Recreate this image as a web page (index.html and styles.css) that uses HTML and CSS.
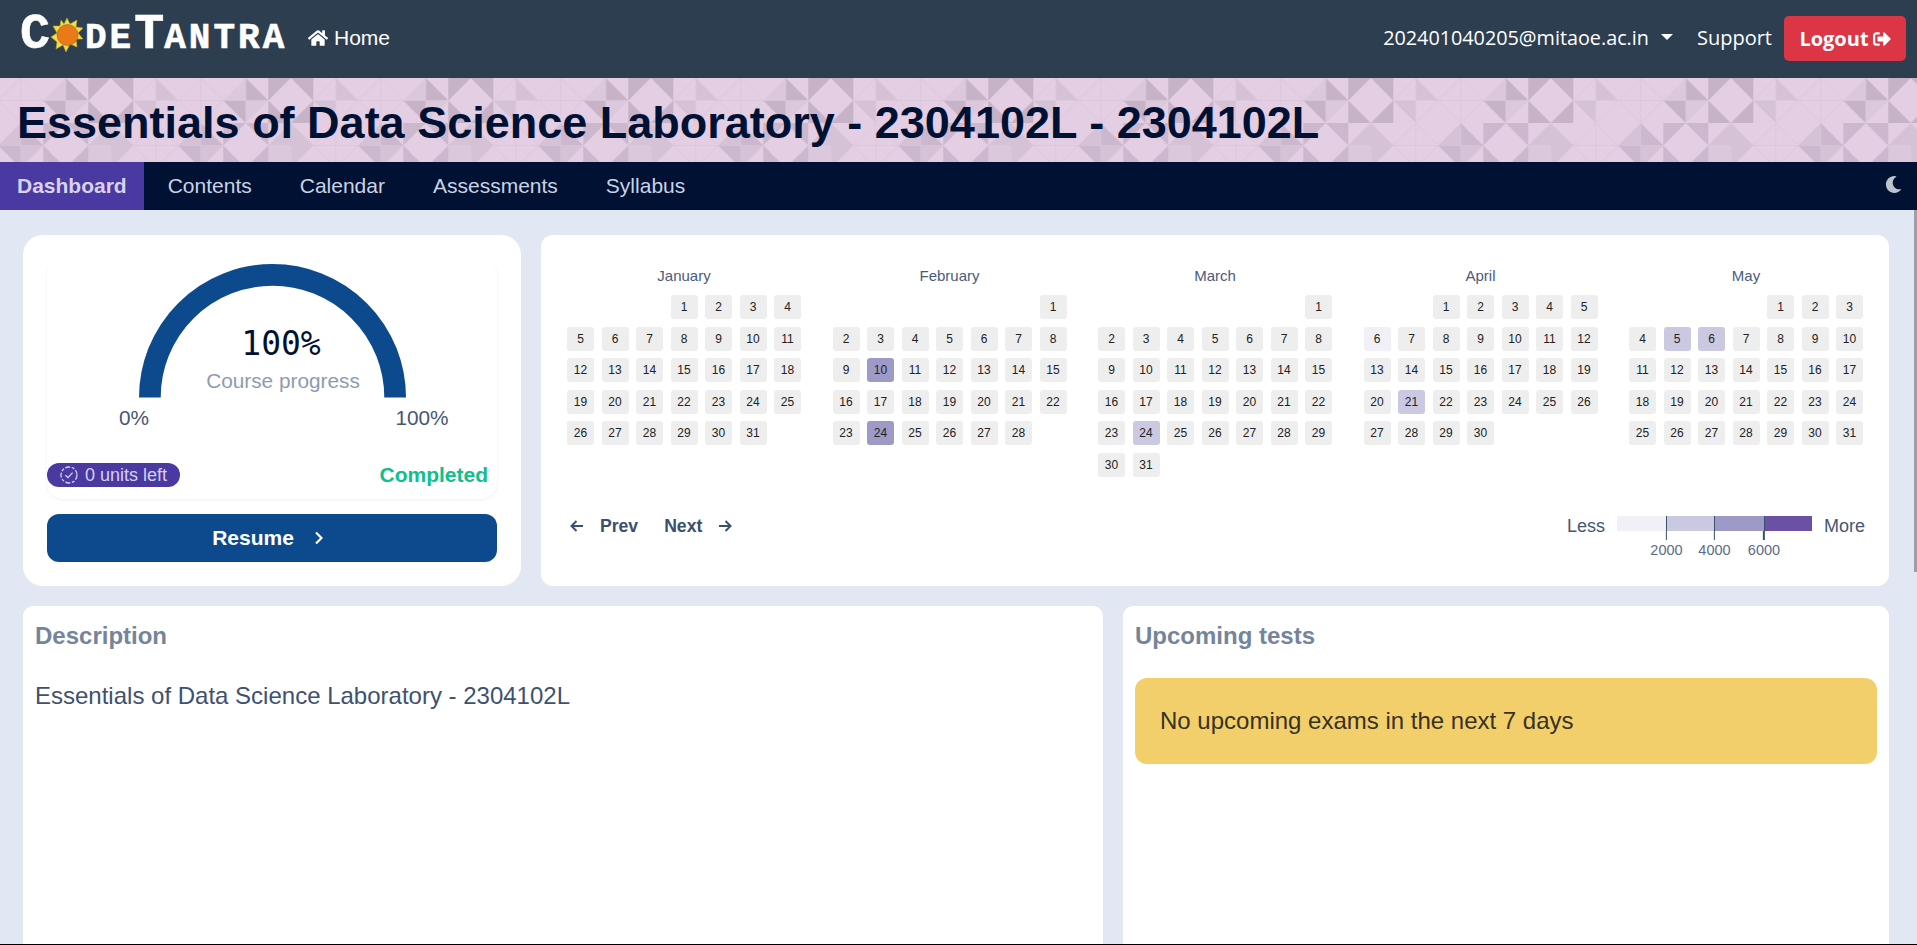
FILE: index.html
```html
<!DOCTYPE html>
<html lang="en">
<head>
<meta charset="utf-8">
<title>Essentials of Data Science Laboratory</title>
<link rel="stylesheet" href="styles.css">
</head>
<body>
<header class="topbar">
  <a class="logo"><span class="lg">C</span><svg class="sun" viewBox="0 0 32 34"><polygon points="16,0 19,6 26,2 25,9 32,10 27,15 32,21 25,21 26,29 19,26 15,34 12,27 5,31 6,24 0,19 6,15 2,8 9,8 10,2 13,6" fill="#f2dc4a" stroke="#b9a32c" stroke-width=".6"/><circle cx="16.5" cy="17" r="10.5" fill="#e97a17" stroke="#8a5a20" stroke-width=".5"/></svg><span class="sm">DE</span><span class="lg">T</span><span class="sm">ANTRA</span></a>
  <a class="home"><svg class="home-ico" viewBox="0 0 576 512"><path fill="#fff" d="M280.37 148.26L96 300.11V464a16 16 0 0 0 16 16l112.06-.29a16 16 0 0 0 15.92-16V368a16 16 0 0 1 16-16h64a16 16 0 0 1 16 16v95.64a16 16 0 0 0 16 16.05L464 480a16 16 0 0 0 16-16V300L295.67 148.26a12.19 12.19 0 0 0-15.3 0zM571.6 251.47L488 182.56V44.05a12 12 0 0 0-12-12h-56a12 12 0 0 0-12 12v72.61L318.47 43a48 48 0 0 0-61 0L4.34 251.47a12 12 0 0 0-1.6 16.9l25.5 31A12 12 0 0 0 45.15 301l235.22-193.74a12.19 12.19 0 0 1 15.3 0L530.9 301a12 12 0 0 0 16.9-1.6l25.5-31a12 12 0 0 0-1.7-16.93z"/></svg>Home</a>
  <div class="top-right">
    <a class="user">202401040205@mitaoe.ac.in<span class="caret"></span></a>
    <a class="support">Support</a>
    <a class="logout">Logout<svg class="out-ico" viewBox="0 0 512 512"><path fill="#fff" d="M497 273L329 441c-15 15-41 4.5-41-17v-96H152c-13.3 0-24-10.7-24-24v-96c0-13.3 10.7-24 24-24h136V88c0-21.4 25.9-32 41-17l168 168c9.3 9.4 9.3 24.6 0 34zM192 436v-40c0-6.6-5.4-12-12-12H96c-17.7 0-32-14.3-32-32V160c0-17.7 14.3-32 32-32h84c6.6 0 12-5.4 12-12V76c0-6.6-5.4-12-12-12H96c-53 0-96 43-96 96v192c0 53 43 96 96 96h84c6.6 0 12-5.4 12-12z"/></svg></a>
  </div>
</header>

<section class="banner">
  <svg class="banner-bg" width="100%" height="100%">
    <defs>
      <pattern id="tri" width="180" height="90" patternUnits="userSpaceOnUse" patternTransform="translate(88.3 0)">
        <rect width="180" height="90" fill="#e3cee3"/>
        <g fill="none" stroke="#dcc7dd" stroke-width="1">
          <path d="M45 22.5L67.5 0M67.5 45L90 22.5M90 22.5L112.5 0L135 22.5L112.5 45L90 22.5M112.5 0V45M90 22.5H135"/>
          <path d="M45 67.5L67.5 45L90 67.5L67.5 90Z M67.5 45V90M45 67.5H90M0 67.5L22.5 90M90 67.5L112.5 90"/>
        </g>
        <g fill="#c6b3c8">
          <path d="M0 0H22.5L0 22.5Z M22.5 0H45V22.5Z M0 22.5L22.5 45H0Z M45 22.5V45H22.5Z"/>
          <path d="M135 22.5H157.5V45Z M157.5 0L180 22.5H157.5Z"/>
        </g>
        <g fill="#cbb8ce">
          <path d="M135 45H157.5L135 67.5Z M157.5 45H180V67.5Z M135 67.5L157.5 90H135Z M180 67.5V90H157.5Z"/>
          <path d="M112.5 45L135 67.5H112.5Z M90 67.5H112.5V90Z"/>
        </g>
        <g fill="#d5c2d7">
          <path d="M67.5 0L90 22.5H67.5Z M45 22.5H67.5V45Z"/>
          <path d="M90 67.5L112.5 45V67.5Z M112.5 67.5H135L112.5 90Z"/>
          <path d="M22.5 45V67.5H0Z M22.5 45L45 67.5H22.5Z M22.5 67.5H45L22.5 90Z"/>
        </g>
        <g fill="#dcc8dd">
          <path d="M135 22.5L157.5 0V22.5Z M157.5 22.5H180L157.5 45Z M0 67.5H22.5V90H0Z"/>
        </g>
      </pattern>
    </defs>
    <rect width="100%" height="100%" fill="url(#tri)"/>
  </svg>
  <h1 class="title">Essentials of Data Science Laboratory - 2304102L - 2304102L</h1>
</section>

<nav class="tabs">
  <a class="tab active">Dashboard</a>
  <a class="tab">Contents</a>
  <a class="tab">Calendar</a>
  <a class="tab">Assessments</a>
  <a class="tab">Syllabus</a>
  <svg class="moon" viewBox="0 0 512 512"><path fill="#bcc3cf" d="M283.211 512c78.962 0 151.079-35.925 198.857-94.792 7.068-8.708-.639-21.43-11.562-19.35-124.203 23.654-238.262-71.576-238.262-196.954 0-72.222 38.662-138.635 101.498-174.394 9.686-5.512 7.25-20.197-3.756-22.23A258.156 258.156 0 0 0 283.211 0c-141.309 0-256 114.511-256 256 0 141.309 114.511 256 256 256z"/></svg>
</nav>

<main class="main">
  <div class="row-top">
    <section class="card progress-card">
      <div class="progress-inner">
        <div class="gauge">
          <svg class="arc" viewBox="0 0 267 134"><path d="M10.85 133.5A122.65 122.65 0 0 1 256.15 133.5" fill="none" stroke="#0d4a8d" stroke-width="21.7"/></svg>
          <div class="pct">100%</div>
          <div class="pct-label">Course progress</div>
          <span class="min">0%</span>
          <span class="max">100%</span>
        </div>
        <div class="status-row">
          <span class="badge"><svg class="badge-ico" viewBox="0 0 18 18"><circle cx="9" cy="9" r="8" fill="none" stroke="#d6d0ee" stroke-width="1.3" stroke-dasharray="5 1.6 3 1.6"/><path d="M5.4 9.2L8 11.6L12.6 6.6" fill="none" stroke="#d6d0ee" stroke-width="1.3"/></svg>0 units left</span>
          <span class="done">Completed</span>
        </div>
      </div>
      <a class="resume">Resume<svg class="chev" viewBox="0 0 8 14"><path d="M1 1.5L6.5 7L1 12.5" fill="none" stroke="#fff" stroke-width="2.2"/></svg></a>
    </section>

    <section class="card heat-card">
      <div class="months">
        <div class="month">
          <div class="mname">January</div>
          <div class="days">
            <i></i><i></i><i></i><b>1</b><b>2</b><b>3</b><b>4</b><b>5</b><b>6</b><b>7</b><b>8</b><b>9</b><b>10</b><b>11</b><b>12</b><b>13</b><b>14</b><b>15</b><b>16</b><b>17</b><b>18</b><b>19</b><b>20</b><b>21</b><b>22</b><b>23</b><b>24</b><b>25</b><b>26</b><b>27</b><b>28</b><b>29</b><b>30</b><b>31</b>
          </div>
        </div>
        <div class="month">
          <div class="mname">February</div>
          <div class="days">
            <i></i><i></i><i></i><i></i><i></i><i></i><b>1</b><b>2</b><b>3</b><b>4</b><b>5</b><b>6</b><b>7</b><b>8</b><b>9</b><b class="l3">10</b><b>11</b><b>12</b><b>13</b><b>14</b><b>15</b><b>16</b><b>17</b><b>18</b><b>19</b><b>20</b><b>21</b><b>22</b><b>23</b><b class="l3">24</b><b>25</b><b>26</b><b>27</b><b>28</b>
          </div>
        </div>
        <div class="month">
          <div class="mname">March</div>
          <div class="days">
            <i></i><i></i><i></i><i></i><i></i><i></i><b>1</b><b>2</b><b>3</b><b>4</b><b>5</b><b>6</b><b>7</b><b>8</b><b>9</b><b>10</b><b>11</b><b>12</b><b>13</b><b>14</b><b>15</b><b>16</b><b>17</b><b>18</b><b>19</b><b>20</b><b>21</b><b>22</b><b>23</b><b class="l2">24</b><b>25</b><b>26</b><b>27</b><b>28</b><b>29</b><b>30</b><b>31</b>
          </div>
        </div>
        <div class="month">
          <div class="mname">April</div>
          <div class="days">
            <i></i><i></i><b>1</b><b>2</b><b>3</b><b>4</b><b>5</b><b class="l1">6</b><b>7</b><b>8</b><b>9</b><b>10</b><b>11</b><b>12</b><b>13</b><b>14</b><b>15</b><b>16</b><b>17</b><b>18</b><b>19</b><b>20</b><b class="l2">21</b><b>22</b><b>23</b><b>24</b><b>25</b><b>26</b><b>27</b><b>28</b><b>29</b><b>30</b>
          </div>
        </div>
        <div class="month">
          <div class="mname">May</div>
          <div class="days">
            <i></i><i></i><i></i><i></i><b>1</b><b>2</b><b>3</b><b>4</b><b class="l2">5</b><b class="l2">6</b><b>7</b><b>8</b><b>9</b><b>10</b><b>11</b><b>12</b><b>13</b><b>14</b><b>15</b><b>16</b><b>17</b><b>18</b><b>19</b><b>20</b><b>21</b><b>22</b><b>23</b><b>24</b><b>25</b><b>26</b><b>27</b><b>28</b><b>29</b><b>30</b><b>31</b>
          </div>
        </div>
      </div>
      <div class="heat-foot">
        <div class="pager">
          <a class="pg"><svg class="arw" viewBox="0 0 14 12"><path d="M13 6H2M6.5 1L1.5 6L6.5 11" fill="none" stroke="#3b4f6e" stroke-width="2"/></svg>Prev</a>
          <a class="pg">Next<svg class="arw" viewBox="0 0 14 12"><path d="M1 6H12M7.5 1L12.5 6L7.5 11" fill="none" stroke="#3b4f6e" stroke-width="2"/></svg></a>
        </div>
        <div class="legend">
          <span class="leg-t">Less</span>
          <div class="scale">
            <div class="bars"><span class="s1"></span><span class="s2"></span><span class="s3"></span><span class="s4"></span></div>
            <div class="ticks"><span>2000</span><span>4000</span><span>6000</span></div>
          </div>
          <span class="leg-t">More</span>
        </div>
      </div>
    </section>
  </div>

  <div class="row-bottom">
    <section class="card panel desc">
      <h2 class="panel-h">Description</h2>
      <p class="desc-text">Essentials of Data Science Laboratory - 2304102L</p>
    </section>
    <section class="card panel tests">
      <h2 class="panel-h">Upcoming tests</h2>
      <div class="alert">No upcoming exams in the next 7 days</div>
    </section>
  </div>
</main>
<div class="thumb"></div>
</body>
</html>
```

FILE: styles.css
```css
* { box-sizing: border-box; }
html, body { margin: 0; height: 945px; overflow: hidden; }
body {
  display: flex;
  flex-direction: column;
  background: #e2e8f3;
  border-bottom: 1px solid #000;
  font-family: "Liberation Sans", Arial, sans-serif;
  position: relative;
}

/* top bar */
.topbar {
  height: 78px;
  flex: none;
  display: flex;
  align-items: center;
  padding: 0 11px 0 20px;
  background: #2d3e50;
  color: #fff;
  font-family: "Open Sans", "Noto Sans", sans-serif;
  font-size: 20px;
}
.logo {
  display: flex;
  align-items: baseline;
  width: 288px;
  font-family: "Liberation Mono", monospace;
  font-weight: 700;
  color: #fff;
  line-height: 1;
  margin-top: -8px;
  -webkit-text-stroke: .6px #fff;
}
.lg { font-size: 50px; }
.sm { font-size: 36px; letter-spacing: 3px; }
.sun { width: 32px; height: 34px; align-self: center; margin: 0 2px 0 1px; }
.home { display: flex; align-items: center; font-family: "Liberation Sans", sans-serif; font-size: 21px; margin-top: -3px; }
.home-ico { width: 20px; height: 18px; margin-right: 6px; }
.top-right { margin-left: auto; display: flex; align-items: center; margin-top: -1px; }
.user { display: flex; align-items: center; margin-right: 24px; margin-top: -3px; font-size: 19.8px; }
.caret {
  width: 0; height: 0;
  margin-left: 12px;
  margin-top: 0;
  border-left: 6px solid transparent;
  border-right: 6px solid transparent;
  border-top: 6px solid #fff;
}
.support { margin-right: 12px; margin-top: -3px; }
.logout {
  width: 122px;
  height: 45px;
  display: flex;
  align-items: center;
  justify-content: center;
  background: #dc3545;
  border-radius: 5px;
  font-weight: 700;
}
.out-ico { width: 18px; height: 18px; margin-left: 4px; }

/* banner */
.banner {
  height: 84px;
  flex: none;
  position: relative;
  overflow: hidden;
  display: flex;
  align-items: center;
  padding: 4px 0 0 17px;
}
.banner-bg { position: absolute; left: 0; top: 0; }
.title {
  position: relative;
  margin: 0;
  font-size: 45px;
  font-weight: 700;
  color: #011133;
  line-height: 1;
}

/* tabs */
.tabs {
  height: 48px;
  flex: none;
  display: flex;
  align-items: stretch;
  background: #011133;
  font-size: 21px;
}
.tab {
  display: flex;
  align-items: center;
  padding: 0 24px;
  color: #c9d3e3;
}
.tab.active {
  padding: 0 17px;
  background: #4a39a0;
  color: #d8d3ef;
  font-weight: 700;
}
.moon { width: 17px; height: 17px; margin: 14px 15px 0 auto; }

/* main */
.main {
  flex: 1;
  min-height: 0;
  display: flex;
  flex-direction: column;
  gap: 20px;
  padding: 25px 28px 0 23px;
}
.card { background: #fff; }
.row-top { display: flex; gap: 20px; height: 351px; flex: none; }
.row-bottom { display: flex; gap: 20px; flex: 1; min-height: 0; }

/* progress */
.progress-card {
  width: 498px;
  flex: none;
  padding: 24px 24px 24px;
  border-radius: 20px;
  display: flex;
  flex-direction: column;
  gap: 15px;
}
.progress-inner {
  height: 240px;
  display: flex;
  flex-direction: column;
  justify-content: space-between;
  border-radius: 16px;
  padding: 5px 0 12px;
  box-shadow: 0 1px 3px rgba(60, 70, 110, .08);
}
.gauge { position: relative; height: 180px; }
.arc { display: block; width: 267px; height: 134px; margin: 0 auto; }
.pct {
  position: absolute;
  left: 234px; top: 61px;
  transform: translateX(-50%);
  font-family: "DejaVu Sans Mono", monospace;
  font-size: 33px;
  color: #011133;
  line-height: 38px;
}
.pct-label {
  position: absolute;
  left: 236px; top: 105px;
  transform: translateX(-50%);
  white-space: nowrap;
  font-size: 20.8px;
  line-height: 24px;
  color: #8f9bb0;
}
.min, .max {
  position: absolute;
  top: 142px;
  transform: translateX(-50%);
  font-size: 20.8px;
  line-height: 24px;
  color: #465672;
}
.min { left: 87px; }
.max { left: 375px; }
.status-row { display: flex; justify-content: space-between; align-items: center; padding-right: 9px; }
.badge {
  height: 24px;
  width: 133px;
  display: flex;
  align-items: center;
  justify-content: center;
  gap: 7px;
  background: #4a39a0;
  border-radius: 12px;
  color: #d6d0ee;
  font-size: 18px;
}
.badge-ico { width: 18px; height: 18px; }
.done { font-size: 21px; font-weight: 700; color: #10c08a; }
.resume {
  height: 48px;
  display: flex;
  align-items: center;
  justify-content: center;
  padding-right: 9px;
  gap: 21px;
  background: #0d4a8d;
  border-radius: 12px;
  color: #fff;
  font-size: 21px;
  font-weight: 700;
}
.chev { width: 8px; height: 14px; }

/* heatmap */
.heat-card {
  flex: 1;
  border-radius: 12px;
  padding: 31px 26px 0;
}
.months { display: flex; gap: 31.5px; height: 244px; }
.month { width: 234px; }
.mname {
  height: 29px;
  text-align: center;
  font-size: 15px;
  line-height: 20px;
  color: #4a5c7b;
}
.days {
  display: grid;
  grid-template-columns: repeat(7, 27px);
  grid-auto-rows: 24px;
  gap: 7.5px;
}
.days b {
  display: flex;
  align-items: center;
  justify-content: center;
  background: #eeeeee;
  border-radius: 3px;
  font-size: 12px;
  font-weight: 400;
  color: #222;
}
.days b.l1 { background: #f2f0f7; }
.days b.l2 { background: #cbc9e2; }
.days b.l3 { background: #9e9ac8; }
.heat-foot { display: flex; justify-content: space-between; align-items: flex-start; }
.pager { display: flex; gap: 26px; padding: 4px 0 0 3px; }
.pg {
  display: flex;
  align-items: center;
  gap: 16px;
  font-size: 17.6px;
  font-weight: 700;
  line-height: 24px;
  color: #3b4f6e;
}
.arw { width: 14px; height: 12px; }
.legend { display: flex; align-items: flex-start; gap: 12px; margin-right: -2px; }
.leg-t { font-size: 18px; line-height: 24px; color: #465672; padding-top: 4px; }
.scale { width: 195px; padding-top: 6px; }
.bars { display: flex; height: 15px; }
.bars span { display: block; }
.s1 { width: 49.5px; background: #f2f0f7; }
.s2 { width: 48px; background: #cbc9e2; border-left: 1.5px solid #3b4f6e; }
.s3 { width: 49.5px; background: #9e9ac8; border-left: 1.5px solid #3b4f6e; }
.s4 { flex: 1; background: #6a51a3; border-left: 1.5px solid #3b4f6e; }
.ticks { position: relative; height: 26px; }
.ticks span {
  position: absolute;
  top: 10px;
  transform: translateX(-50%);
  font-size: 14.5px;
  line-height: 18px;
  color: #5a6b87;
}
.ticks span::before {
  content: "";
  position: absolute;
  left: calc(50% - .75px);
  top: -10px;
  width: 1.5px;
  height: 9px;
  background: #3b4f6e;
}
.ticks span:nth-child(1) { left: 49.5px; }
.ticks span:nth-child(2) { left: 97.5px; }
.ticks span:nth-child(3) { left: 147px; }

/* bottom panels */
.panel { border-radius: 10px 10px 0 0; padding: 16px 12px 0; }
.desc { width: 1080px; flex: none; }
.tests { flex: 1; }
.panel-h {
  margin: 0;
  font-size: 24px;
  line-height: 28px;
  font-weight: 700;
  color: #75849c;
}
.desc-text { margin: 32px 0 0; font-size: 24px; line-height: 28px; color: #3f5170; }
.alert {
  margin-top: 28px;
  height: 86px;
  display: flex;
  align-items: center;
  padding-left: 25px;
  background: #f3cf6b;
  border-radius: 12px;
  font-size: 24px;
  color: #37321f;
}
.thumb { position: absolute; right: 0; top: 210px; width: 3px; height: 362px; background: #9aa0ab; }
```
